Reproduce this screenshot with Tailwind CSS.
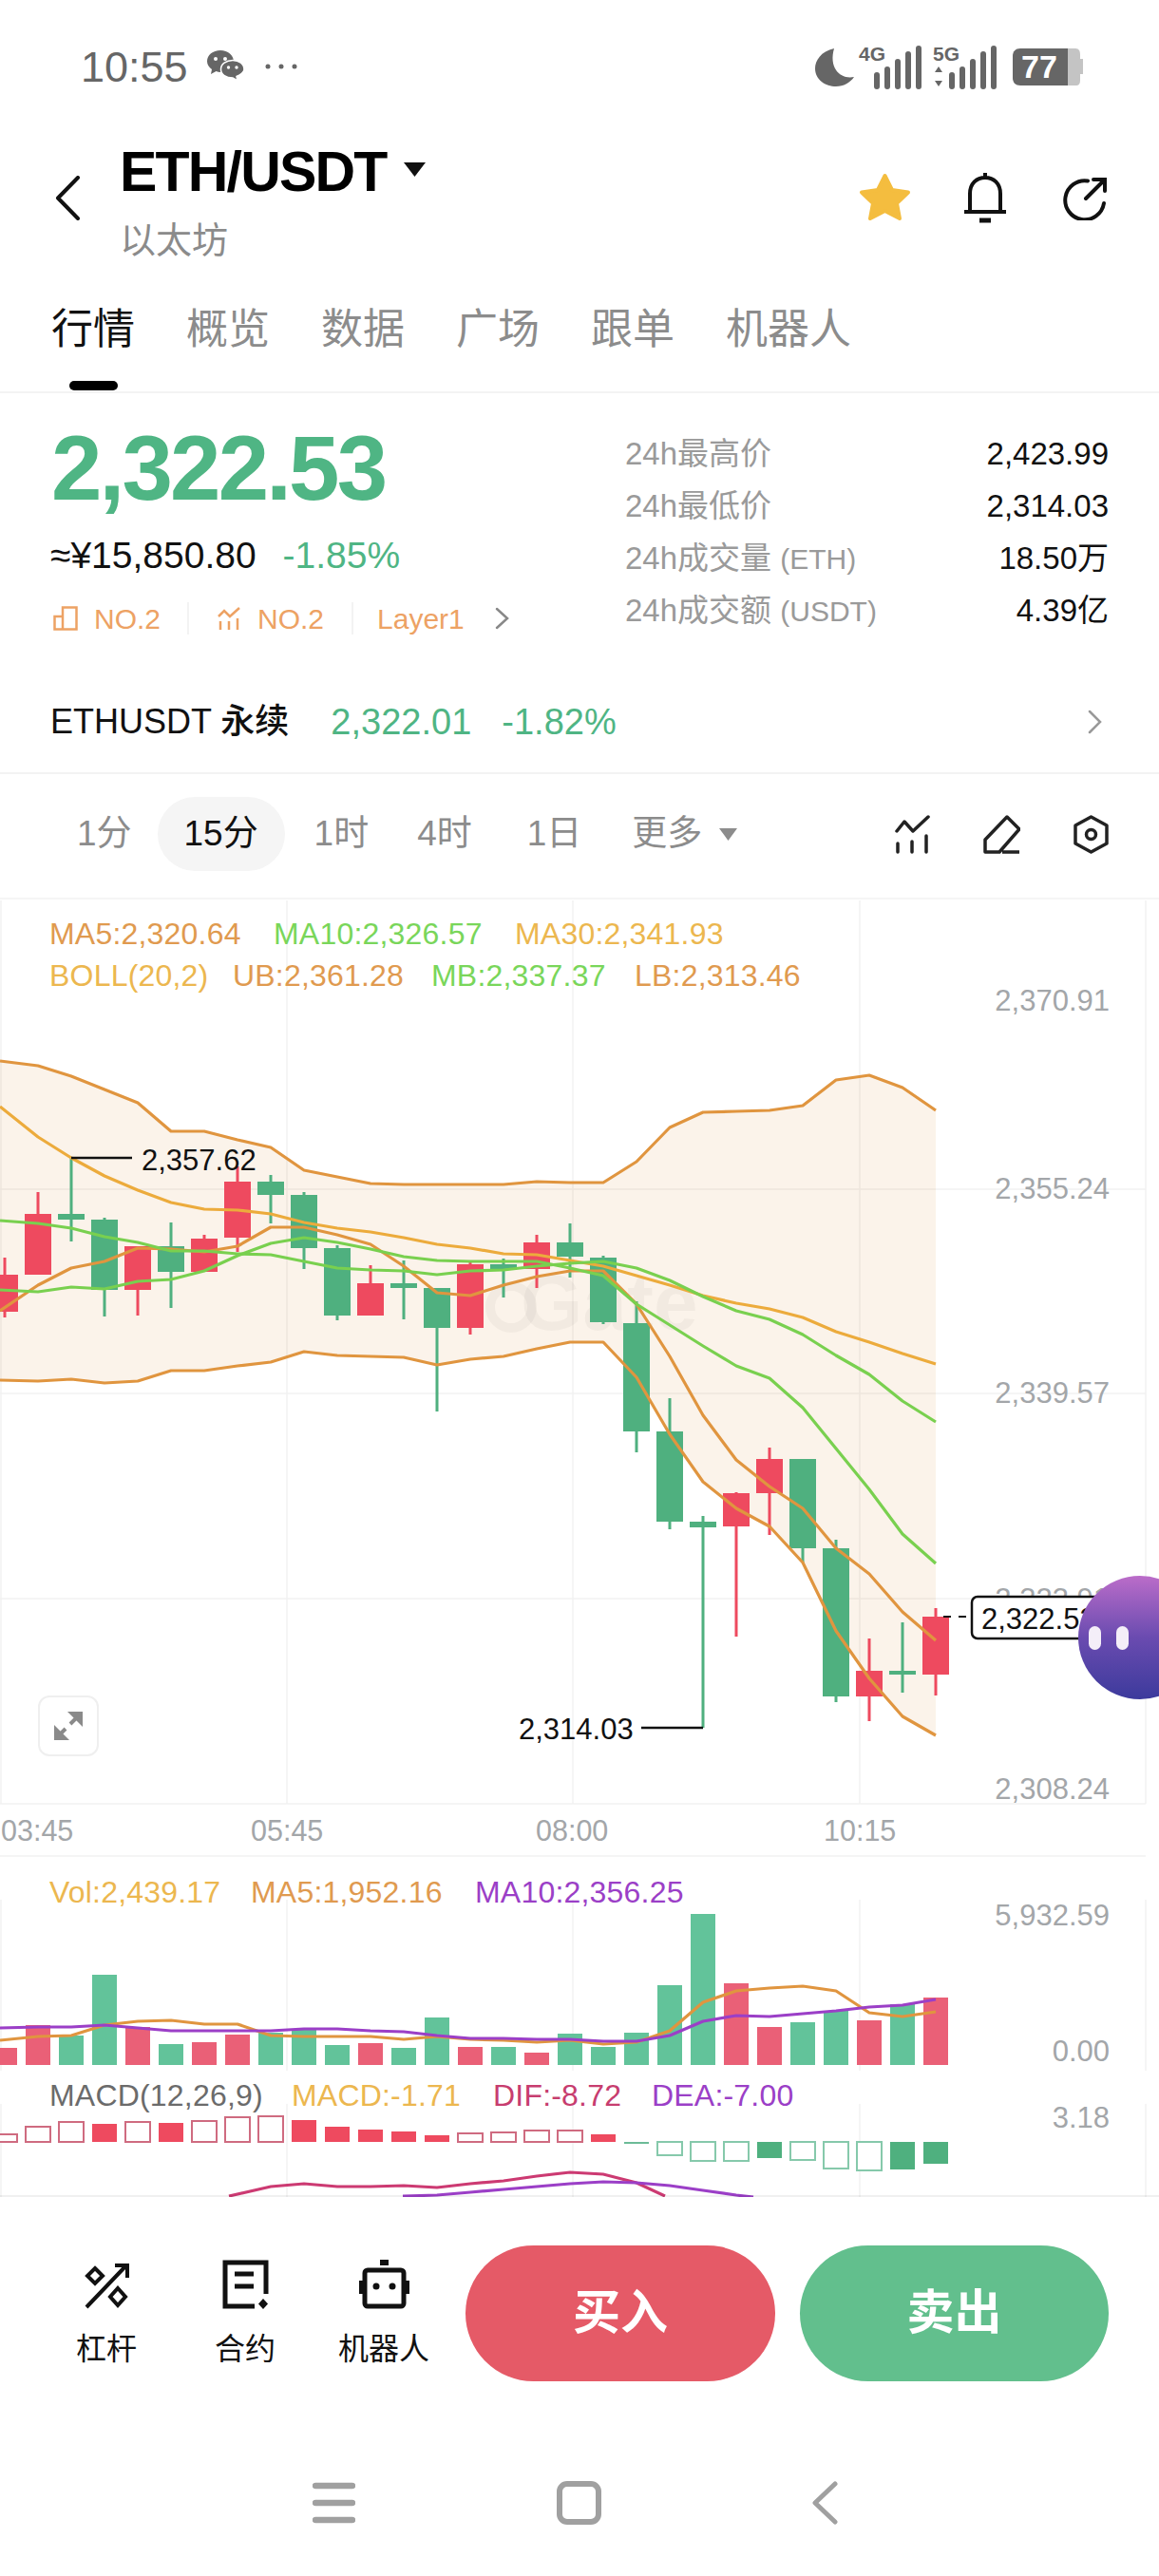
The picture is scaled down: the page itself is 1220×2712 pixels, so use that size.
<!DOCTYPE html>
<html lang="zh">
<head>
<meta charset="utf-8">
<script src="https://cdn.jsdelivr.net/npm/@tailwindcss/browser@4"></script>
</head>
<body class="bg-white font-['Liberation_Sans','Noto_Sans_CJK_SC',sans-serif] text-[#111]">
<div class="w-[1220px] h-[2712px] overflow-hidden flex flex-col bg-white">

  <!-- status bar -->
  <div class="h-[140px] shrink-0 flex items-center pl-[85px] pr-[80px] text-[#666]">
    <span class="text-[45px] leading-[45px]">10:55</span>
    <svg class="ml-[20px] -mt-[2px]" width="39" height="32" viewBox="0 0 39 32"><path d="M14 0C6 0 0 5 0 11.500C0 15 2 18 5 20L4 25L9.500 22C11 22.600 12.500 23 14 23L28 12C28 5 22 0 14 0Z" fill="#666"/><circle cx="9" cy="9" r="2" fill="#fff"/><circle cx="19" cy="9" r="2" fill="#fff"/><path d="M27 10.500C20 10.500 14.500 14.500 14.500 20C14.500 25.500 20 29 27 29L32 32L31 27.500C35 25.500 39 23.500 39 20C39 14.500 34 10.500 27 10.500Z" fill="#666" stroke="#fff" stroke-width="1.500"/><circle cx="22.500" cy="18" r="1.700" fill="#fff"/><circle cx="31" cy="18" r="1.700" fill="#fff"/></svg>
    <svg class="ml-[22px]" width="34" height="6" viewBox="0 0 34 6" fill="#666"><circle cx="3" cy="3" r="2.500"/><circle cx="17" cy="3" r="2.500"/><circle cx="31" cy="3" r="2.500"/></svg>
    <svg class="ml-auto" width="282" height="60" viewBox="858 40 282 60">
      <path d="M878 51C864 54 858 64 858 72C858 84 869 91 880 91C888 91 895 87 899 81C885 84 872 72 878 51Z" fill="#666"/>
      <text x="904" y="64" font-size="21" font-weight="700" fill="#666">4G</text>
      <path d="M923 91V79M934 91V73M945 91V65M956 91V57M967 91V51" stroke="#666" stroke-width="6" stroke-linecap="round"/>
      <text x="982" y="64" font-size="21" font-weight="700" fill="#666">5G</text>
      <path d="M988 70l4 6h-8zM988 91l-4-6h8z" fill="#666"/>
      <path d="M1002 91V79M1013 91V73M1024 91V65M1035 91V57M1046 91V51" stroke="#666" stroke-width="6" stroke-linecap="round"/>
      <path d="M1074 51H1132C1136 51 1137 54 1137 58V84C1137 88 1136 90 1132 90H1074Z" fill="#c4c4c4"/>
      <path d="M1074 51H1124V90H1074C1069 90 1066 87 1066 82V59C1066 54 1069 51 1074 51Z" fill="#666"/>
      <path d="M1137 62h3v16h-3z" fill="#c4c4c4"/>
      <text x="1094" y="82" font-size="34" font-weight="700" fill="#fff" text-anchor="middle">77</text>
    </svg>
  </div>

  <!-- header -->
  <div class="h-[160px] shrink-0 flex items-start pt-[12px] pl-[58px] pr-[55px]">
    <svg class="mt-[33px] shrink-0" width="26" height="47" viewBox="0 0 26 47" fill="none" stroke="#111" stroke-width="4" stroke-linecap="round" stroke-linejoin="round"><path d="M24 2L3 23.500L24 45"/></svg>
    <div class="ml-[42px] flex flex-col">
      <div class="flex items-center h-[58px]">
        <span class="text-[59px] leading-[58px] font-bold tracking-[-1.800px] text-black">ETH/USDT</span>
        <svg class="ml-[18px] mt-[-6px]" width="23" height="15" viewBox="0 0 23 15"><path d="M0 0H23L11.500 15Z" fill="#111"/></svg>
      </div>
      <span class="mt-[23px] text-[38px] leading-[40px] text-[#8b8b8b]">以太坊</span>
    </div>
    <div class="ml-auto flex items-start mt-[30px]">
      <svg width="55" height="51" viewBox="0 0 55 51"><path d="M27.500 3L35 18L52 20.500L40 32L43 48L27.500 40L12 48L15 32L3 20.500L20 18Z" fill="#f4bd3f" stroke="#f4bd3f" stroke-width="4" stroke-linejoin="round"/></svg>
      <svg class="ml-[55px]" width="46" height="53" viewBox="0 0 46 53" fill="none" stroke="#111" stroke-width="4"><path d="M23 0V5M7 41V22C7 11 14 5 23 5C32 5 39 11 39 22V41M1 41H45"/><path d="M17 50H29" stroke-width="5"/></svg>
      <svg class="ml-[58px] mt-[4px]" width="47" height="46" viewBox="0 0 47 46" fill="none" stroke="#111" stroke-width="4" stroke-linecap="round"><path d="M27 4.500A20.500 20.500 0 1 0 44 28"/><path d="M25 23L45 3M33 3H45V15"/></svg>
    </div>
  </div>

  <!-- tabs -->
  <div class="h-[114px] shrink-0 flex items-start pt-[25px] pl-[54px] gap-[54px] text-[44px] leading-[44px] text-[#8c8c8c] border-b-2 border-[#f3f3f3]">
    <div class="flex flex-col items-center text-[#111]"><span>行情</span><span class="mt-[32px] w-[51px] h-[10px] rounded-full bg-black"></span></div>
    <span>概览</span><span>数据</span><span>广场</span><span>跟单</span><span>机器人</span>
  </div>

  <!-- stats -->
  <div class="h-[300px] shrink-0 flex pl-[54px] pr-[53px]">
    <div class="w-[604px] shrink-0 flex flex-col pt-[33px]">
      <span class="text-[96px] leading-[92px] font-bold tracking-[-2.800px] text-[#4fb584]">2,322.53</span>
      <div class="mt-[26px] flex items-center text-[39px] leading-[40px]">
        <span class="-ml-[1px]">≈¥15,850.80</span>
        <span class="ml-[28px] text-[#4fb584]">-1.85%</span>
      </div>
      <div class="mt-[28px] flex items-center h-[36px] text-[30px] text-[#eda264]">
        <svg width="26" height="26" viewBox="0 0 26 26" fill="none" stroke="#eda264" stroke-width="2.500" class="ml-[2px]"><path d="M1.500 24.500V11H10V24.500ZM10 24.500V1.500H24.500V24.500Z"/></svg>
        <span class="ml-[17px]">NO.2</span>
        <span class="ml-[28px] w-[2px] h-[34px] bg-[#f3f3f3]"></span>
        <svg class="ml-[29px]" width="26" height="26" viewBox="0 0 26 26" fill="none" stroke="#eda264" stroke-width="2.500"><path d="M2 11L8 5L14 11L24 2M4 25V16M13 25V16M22 25V13"/></svg>
        <span class="ml-[17px]">NO.2</span>
        <span class="ml-[29px] w-[2px] h-[34px] bg-[#f3f3f3]"></span>
        <span class="ml-[25px]">Layer1</span>
        <svg class="ml-[32px]" width="15" height="24" viewBox="0 0 15 24" fill="none" stroke="#888" stroke-width="2.500" stroke-linecap="round"><path d="M2 2L13 12L2 22"/></svg>
      </div>
    </div>
    <div class="flex-1 flex flex-col pt-[36px] text-[33px]">
      <div class="h-[55px] flex items-center justify-between"><span class="text-[#9a9a9a]">24h最高价</span><span>2,423.99</span></div>
      <div class="h-[55px] flex items-center justify-between"><span class="text-[#9a9a9a]">24h最低价</span><span>2,314.03</span></div>
      <div class="h-[55px] flex items-center justify-between"><span class="text-[#9a9a9a]">24h成交量 <span class="text-[30px]">(ETH)</span></span><span>18.50万</span></div>
      <div class="h-[55px] flex items-center justify-between"><span class="text-[#9a9a9a]">24h成交额 <span class="text-[30px]">(USDT)</span></span><span>4.39亿</span></div>
    </div>
  </div>

  <!-- perpetual row -->
  <div class="h-[101px] shrink-0 flex items-center pl-[53px] pr-[60px] pb-[7px] border-b-2 border-[#f3f3f3]">
    <span class="text-[36px] font-medium">ETHUSDT 永续</span>
    <span class="ml-[44px] text-[38px] text-[#4fb584]">2,322.01</span>
    <span class="ml-[32px] text-[38px] text-[#4fb584]">-1.82%</span>
    <svg class="ml-auto" width="15" height="26" viewBox="0 0 15 26" fill="none" stroke="#999" stroke-width="2.500" stroke-linecap="round"><path d="M2 2L13 13L2 24"/></svg>
  </div>

  <!-- period toolbar -->
  <div class="h-[130px] shrink-0 flex items-center pl-[81px] pr-[53px] pb-[4px] text-[37px] leading-[40px] text-[#8c8c8c]">
    <span>1分</span>
    <span class="ml-[27px] h-[78px] w-[134px] flex items-center justify-center rounded-full bg-[#f5f5f5] text-[#111]">15分</span>
    <span class="ml-[31px]">1时</span>
    <span class="ml-[51px]">4时</span>
    <span class="ml-[58px]">1日</span>
    <span class="ml-[53px]">更多</span>
    <svg class="ml-[18px]" width="19" height="13" viewBox="0 0 19 13"><path d="M0 0H19L9.500 13Z" fill="#8c8c8c"/></svg>
    <svg class="ml-auto" width="37" height="41" viewBox="0 0 37 41" fill="none" stroke="#222" stroke-width="3.500" stroke-linecap="round" stroke-linejoin="round"><path d="M2 17L10 7L19 17L35 2M3 30V39M18 28V39M33 22V39"/></svg>
    <svg class="ml-[56px]" width="39" height="41" viewBox="0 0 39 41" fill="none" stroke="#222" stroke-width="3.500" stroke-linejoin="round"><path d="M25 2L38 15L17 39H2V26ZM20 39H38"/></svg>
    <svg class="ml-[56px]" width="37" height="41" viewBox="0 0 37 41" fill="none" stroke="#222" stroke-width="3.500" stroke-linejoin="round"><path d="M18.500 2L35 11V30L18.500 39L2 30V11Z"/><circle cx="18.500" cy="20.500" r="5"/></svg>
  </div>

  <!-- chart canvas -->
  <div class="relative h-[1368px] shrink-0 overflow-hidden">
    <svg class="absolute inset-0" width="1220" height="1368" viewBox="0 945 1220 1368" fill="none">
      <!-- band -->
      <polygon fill="#fbf3ea" points="0,1117 40,1122 75,1133 110,1147 145,1161 180,1191 215,1191 250,1200 285,1208 320,1232 355,1239 390,1246 425,1247 460,1247 495,1247 530,1247 565,1244 600,1245 635,1245 670,1223 705,1187 740,1171 775,1170 810,1169 845,1164 880,1137 915,1132 950,1145 985,1169 985,1827 950,1807 915,1767 880,1717 845,1645 810,1607 775,1588 740,1560 705,1510 670,1450 635,1413 600,1413 565,1420 530,1428 495,1431 460,1437 425,1429 390,1428 355,1427 320,1423 285,1434 250,1438 215,1443 180,1443 145,1454 110,1456 75,1452 40,1454 0,1453"/>
      <!-- grid -->
      <path d="M0 946H1220M1 948V1899M302 948V1899M603 948V1899M905 948V1899M1206 948V1899M0 1252H1206M0 1467H1206M0 1683H1206M0 1899H1206M0 1954H1206M1 2000V2180M302 2000V2180M603 2000V2180M905 2000V2180M1206 2000V2180M1 2215V2313M302 2215V2313M603 2215V2313M905 2215V2313M1206 2215V2313" stroke="#000" stroke-opacity=".055" stroke-width="1.500"/>
      <!-- watermark -->
      <circle cx="538" cy="1376" r="22" stroke="#000" stroke-opacity=".035" stroke-width="10"/>
      <text x="548" y="1400" font-size="84" font-weight="700" fill="#000" fill-opacity=".035">Gate</text>
      <!-- wicks -->
      <path stroke="#ee4a5f" stroke-width="3" d="M5 1324V1387M40 1255V1342M145 1312V1385M215 1300V1339M250 1228V1318M390 1332V1385M495 1329V1405M565 1300V1356M775 1571V1723M810 1524V1616M915 1725V1812M985 1693V1785"/>
      <path stroke="#4fb07f" stroke-width="3" d="M75 1219V1307M110 1282V1386M180 1287V1377M285 1237V1288M320 1255V1336M355 1311V1390M425 1327V1389M460 1356V1486M530 1325V1366M600 1288V1345M635 1322V1394M670 1370V1529M705 1472V1610M740 1596V1819M845 1536V1645M880 1621V1792M950 1708V1782"/>
      <!-- bodies -->
      <path fill="#ee4a5f" d="M-9 1342h28v39h-28zM26 1278h28v64h-28zM131 1312h28v46h-28zM201 1304h28v35h-28zM236 1244h28v59h-28zM376 1351h28v34h-28zM481 1331h28v67h-28zM551 1308h28v28h-28zM761 1572h28v35h-28zM796 1536h28v36h-28zM901 1759h28v27h-28zM971 1702h28v61h-28z"/>
      <path fill="#4fb07f" d="M61 1278h28v6h-28zM96 1284h28v74h-28zM166 1312h28v27h-28zM271 1244h28v14h-28zM306 1258h28v56h-28zM341 1314h28v71h-28zM411 1351h28v5h-28zM446 1356h28v42h-28zM516 1331h28v5h-28zM586 1308h28v15h-28zM621 1324h28v68h-28zM656 1393h28v114h-28zM691 1507h28v95h-28zM726 1602h28v6h-28zM831 1536h28v94h-28zM866 1630h28v156h-28zM936 1759h28v4h-28z"/>
      <!-- averages -->
      <g stroke-width="3.200" stroke-linejoin="round">
        <polyline stroke="#e0953f" points="0,1117 40,1122 75,1133 110,1147 145,1161 180,1191 215,1191 250,1200 285,1208 320,1232 355,1239 390,1246 425,1247 460,1247 495,1247 530,1247 565,1244 600,1245 635,1245 670,1223 705,1187 740,1171 775,1170 810,1169 845,1164 880,1137 915,1132 950,1145 985,1169"/>
        <polyline stroke="#e0953f" points="0,1453 40,1454 75,1452 110,1456 145,1454 180,1443 215,1443 250,1438 285,1434 320,1423 355,1427 390,1428 425,1429 460,1437 495,1431 530,1428 565,1420 600,1413 635,1413 670,1450 705,1510 740,1560 775,1588 810,1607 845,1645 880,1717 915,1767 950,1807 985,1827"/>
        <polyline stroke="#e0953f" points="0,1380 40,1353 75,1335 110,1328 145,1314 180,1315 215,1318 250,1312 285,1292 320,1292 355,1300 390,1310 425,1333 460,1361 495,1364 530,1353 565,1344 600,1338 635,1338 670,1373 705,1428 740,1490 775,1537 810,1565 845,1588 880,1630 915,1657 950,1697 985,1727"/>
        <polyline stroke="#ecab3c" points="0,1165 40,1197 75,1219 110,1238 145,1253 180,1266 215,1273 250,1274 285,1278 320,1287 355,1293 390,1297 425,1303 460,1310 495,1314 530,1320 565,1321 600,1327 635,1333 670,1343 705,1353 740,1364 775,1372 810,1378 845,1387 880,1402 915,1413 950,1425 985,1436"/>
        <polyline stroke="#79d04f" points="0,1285 40,1288 75,1293 110,1302 145,1308 180,1317 215,1317 250,1320 285,1321 320,1328 355,1335 390,1337 425,1338 460,1342 495,1338 530,1337 565,1333 600,1330 635,1328 670,1335 705,1348 740,1365 775,1380 810,1389 845,1405 880,1427 915,1447 950,1475 985,1497"/>
        <polyline stroke="#79d04f" points="0,1358 40,1360 75,1355 110,1357 145,1349 180,1347 215,1338 250,1322 285,1309 320,1303 355,1308 390,1315 425,1323 460,1327 495,1328 530,1328 565,1328 600,1335 635,1343 670,1373 705,1395 740,1417 775,1438 810,1451 845,1482 880,1525 915,1568 950,1615 985,1646"/>
      </g>
      <!-- legends -->
      <g font-size="32" letter-spacing=".2">
        <text x="52" y="994" fill="#e09a4f">MA5:2,320.64</text>
        <text x="288" y="994" fill="#79d65a">MA10:2,326.57</text>
        <text x="542" y="994" fill="#ecb74f">MA30:2,341.93</text>
        <text x="52" y="1038" fill="#ecb74f">BOLL(20,2)</text>
        <text x="245" y="1038" fill="#e09a4f">UB:2,361.28</text>
        <text x="454" y="1038" fill="#79d65a">MB:2,337.37</text>
        <text x="668" y="1038" fill="#e09a4f">LB:2,313.46</text>
        <text x="52" y="2003" fill="#ecb74f">Vol:2,439.17</text>
        <text x="264" y="2003" fill="#e09a4f">MA5:1,952.16</text>
        <text x="500" y="2003" fill="#9b3fc7">MA10:2,356.25</text>
        <text x="52" y="2217" fill="#6b6b6b">MACD(12,26,9)</text>
        <text x="307" y="2217" fill="#ecb74f">MACD:-1.71</text>
        <text x="519" y="2217" fill="#c73d6f">DIF:-8.72</text>
        <text x="686" y="2217" fill="#9b3fc7">DEA:-7.00</text>
      </g>
      <!-- price axis -->
      <g font-size="31" fill="#a3a6a9" text-anchor="end">
        <text x="1168" y="1064">2,370.91</text>
        <text x="1168" y="1262">2,355.24</text>
        <text x="1168" y="1477">2,339.57</text>
        <text x="1168" y="1694">2,323.91</text>
        <text x="1168" y="1894">2,308.24</text>
        <text x="1168" y="2027">5,932.59</text>
        <text x="1168" y="2170">0.00</text>
        <text x="1168" y="2240">3.18</text>
      </g>
      <!-- time axis -->
      <g font-size="30.500" fill="#a3a6a9">
        <text x="1" y="1938">03:45</text>
        <text x="264" y="1938">05:45</text>
        <text x="564" y="1938">08:00</text>
        <text x="867" y="1938">10:15</text>
      </g>
      <!-- extremes -->
      <path stroke="#111" stroke-width="2.500" d="M75 1219H139M675 1819H740"/>
      <text x="149" y="1232" font-size="31" fill="#111">2,357.62</text>
      <text x="546" y="1831" font-size="31" fill="#111">2,314.03</text>
      <!-- expand -->
      <rect x="41" y="1786" width="62" height="62" rx="11" fill="#fff" stroke="#efefef" stroke-width="2"/>
      <path fill="#8a8a8a" d="M87 1802V1818L71 1802ZM57 1832V1816L73 1832Z"/>
      <path stroke="#8a8a8a" stroke-width="4" d="M81 1808L74 1815M63 1826L69 1820"/>
      <!-- current price tag -->
      <path stroke="#111" stroke-width="2" stroke-dasharray="8 8" d="M993 1702H1022"/>
      <rect x="1023" y="1681" width="140" height="44" rx="6" fill="#fff" stroke="#111" stroke-width="2.500"/>
      <text x="1033" y="1715" font-size="31" fill="#111">2,322.53</text>
      <!-- volume -->
      <path fill="#ea6077" d="M-8 2156h26V2174h-26zM27 2132h26V2174h-26zM132 2134h26V2174h-26zM202 2150h26V2174h-26zM237 2142h26V2174h-26zM377 2151h26V2174h-26zM482 2155h26V2174h-26zM552 2161h26V2174h-26zM762 2088h26V2174h-26zM797 2134h26V2174h-26zM902 2127h26V2174h-26zM972 2103h26V2174h-26z"/>
      <path fill="#62c39a" d="M62 2143h26V2174h-26zM97 2079h26V2174h-26zM167 2152h26V2174h-26zM272 2140h26V2174h-26zM307 2137h26V2174h-26zM342 2153h26V2174h-26zM412 2156h26V2174h-26zM447 2124h26V2174h-26zM517 2155h26V2174h-26zM587 2141h26V2174h-26zM622 2155h26V2174h-26zM657 2140h26V2174h-26zM692 2090h26V2174h-26zM727 2015h26V2174h-26zM832 2129h26V2174h-26zM867 2117h26V2174h-26zM937 2110h26V2174h-26z"/>
      <g stroke-width="3.200" stroke-linejoin="round">
        <polyline stroke="#e0953f" points="0,2148 40,2144 75,2143 110,2132 145,2128 180,2127 215,2131 250,2131 285,2143 320,2144 355,2144 390,2144 425,2147 460,2144 495,2147 530,2148 565,2150 600,2148 635,2152 670,2150 705,2138 740,2108 775,2096 810,2093 845,2091 880,2096 915,2119 950,2123 985,2118"/>
        <polyline stroke="#9b3fc7" points="0,2135 40,2134 75,2134 110,2132 145,2135 180,2138 215,2138 250,2138 285,2138 320,2136 355,2136 390,2138 425,2139 460,2143 495,2146 530,2146 565,2147 600,2147 635,2149 670,2149 705,2143 740,2128 775,2122 810,2123 845,2120 880,2117 915,2113 950,2111 985,2105"/>
      </g>
      <!-- macd histogram -->
      <path fill="#fff" stroke="#cf6b80" stroke-width="2" d="M-8 2247h26v8h-26zM27 2239h26v16h-26zM62 2234h26v21h-26zM132 2234h26v21h-26zM202 2233h26v22h-26zM237 2229h26v26h-26zM272 2228h26v27h-26zM482 2246h26v9h-26zM517 2245h26v10h-26zM552 2243h26v12h-26zM587 2243h26v12h-26z"/>
      <path fill="#ee4a5f" d="M97 2236h26v19h-26zM167 2235h26v20h-26zM307 2232h26v23h-26zM342 2239h26v16h-26zM377 2242h26v13h-26zM412 2244h26v11h-26zM447 2248h26v7h-26zM622 2247h26v8h-26z"/>
      <path fill="#fff" stroke="#86c9ab" stroke-width="2" d="M692 2255h26v14h-26zM727 2255h26v20h-26zM762 2255h26v20h-26zM832 2255h26v19h-26zM867 2255h26v28h-26zM902 2255h26v30h-26z"/>
      <path fill="#4fb07f" d="M797 2255h26v17h-26zM937 2255h26v29h-26zM972 2255h26v23h-26z"/>
      <path stroke="#6cbb97" stroke-width="2" d="M657 2256h26"/>
      <!-- macd lines -->
      <g stroke-width="3.200">
        <polyline stroke="#cc3a72" points="241,2312 285,2302 320,2299 355,2302 390,2302 425,2301 460,2303 495,2299 530,2296 565,2291 600,2287 635,2289 670,2298 700,2312"/>
        <polyline stroke="#9b3fc7" points="424,2312 460,2311 495,2308 530,2305 565,2302 600,2299 635,2297 670,2298 705,2301 740,2306 775,2311 793,2313"/>
      </g>
      <path stroke="#000" stroke-opacity=".06" stroke-width="2" d="M0 2312H1220"/>
    </svg>
    <!-- floating assistant -->
    <div class="absolute left-[1135px] top-[714px] w-[130px] h-[130px] rounded-full bg-linear-to-b from-[#bb6cc9] via-[#6a4bb0] to-[#3c3a9c] flex items-center pl-[11px] gap-[16px]">
      <span class="w-[13px] h-[25px] rounded-full bg-[#f4eef8]"></span>
      <span class="w-[13px] h-[25px] rounded-full bg-[#f4eef8]"></span>
    </div>
  </div>

  <!-- action bar -->
  <div class="shrink-0 flex items-start pt-[51px] pl-[39px] h-[194px]">
    <div class="w-[146px] h-[143px] flex flex-col items-center pt-[15px]">
      <svg class="h-[52px]" width="48" height="52" viewBox="0 0 48 52" fill="none" stroke="#111" stroke-width="4"><path d="M3 50L45 6M33 6H46V19"/><path d="M12 9L20 17L12 25L4 17Z"/><path d="M36 30L44 39L36 48L28 39Z"/></svg>
      <span class="mt-[24px] text-[32px] leading-[36px]">杠杆</span>
    </div>
    <div class="w-[146px] h-[143px] flex flex-col items-center pt-[15px]">
      <svg width="49" height="52" viewBox="0 0 49 52" fill="none" stroke="#111" stroke-width="5"><path d="M46 36V3H3V49H34"/><path d="M13 15H33M13 28H33"/><path d="M43 41L48 46.500L43 52L38 46.500Z" fill="#111" stroke="none"/></svg>
      <span class="mt-[24px] text-[32px] leading-[36px]">合约</span>
    </div>
    <div class="w-[146px] h-[143px] flex flex-col items-center pt-[15px]">
      <svg width="53" height="52" viewBox="0 0 53 52" fill="none" stroke="#111" stroke-width="5"><rect x="6" y="11" width="41" height="38" rx="3"/><path d="M22 0H31V6H22Z" fill="#111" stroke="none"/><path d="M2 22V36M51 22V36" stroke-width="4"/><circle cx="18" cy="28" r="3.500" fill="#111" stroke="none"/><circle cx="35" cy="28" r="3.500" fill="#111" stroke="none"/></svg>
      <span class="mt-[24px] text-[32px] leading-[36px]">机器人</span>
    </div>
    <div class="ml-[13px] w-[326px] h-[143px] rounded-full bg-[#e55a67] flex items-center justify-center text-white text-[50px] font-bold">买入</div>
    <div class="ml-[26px] w-[325px] h-[143px] rounded-full bg-[#62bf8d] flex items-center justify-center text-white text-[50px] font-bold">卖出</div>
  </div>

  <!-- system navigation -->
  <div class="shrink-0 flex items-center pl-[329px] mt-[105px] h-[46px]">
    <svg width="45" height="44" viewBox="0 0 45 44" fill="none" stroke="#a0a0a0" stroke-width="6.500" stroke-linecap="round"><path d="M3 4H42M3 22H42M3 40H42"/></svg>
    <svg class="ml-[212px]" width="47" height="46" viewBox="0 0 47 46" fill="none" stroke="#a0a0a0" stroke-width="6"><rect x="3" y="3" width="41" height="40" rx="8"/></svg>
    <svg class="ml-[221px]" width="28" height="46" viewBox="0 0 28 46" fill="none" stroke="#a0a0a0" stroke-width="5" stroke-linecap="round" stroke-linejoin="round"><path d="M25 3L4 23L25 43"/></svg>
  </div>

</div>
</body>
</html>
